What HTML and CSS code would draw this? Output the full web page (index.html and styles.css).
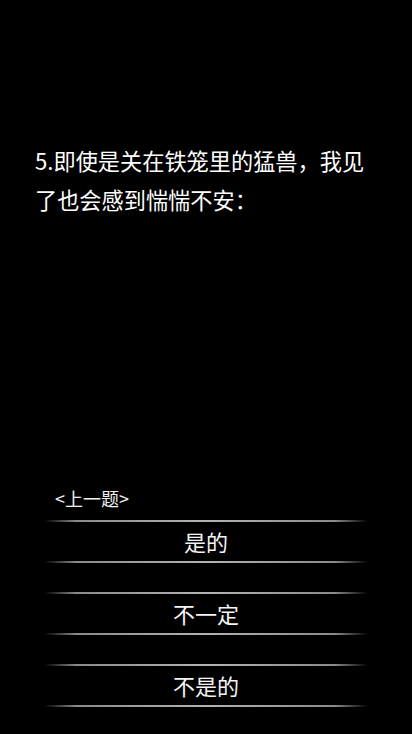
FILE: index.html
```html
<!DOCTYPE html>
<html lang="zh">
<head>
<meta charset="utf-8">
<meta name="viewport" content="width=412">
<link rel="stylesheet" href="styles.css">
</head>
<body>
<div class="screen">
  <div class="question">5.即使是关在铁笼里的猛兽，我见了也会感到惴惴不安：</div>
  <div class="answers">
    <div class="prev">&lt;上一题&gt;</div>
    <div class="option">是的</div>
    <div class="option">不一定</div>
    <div class="option">不是的</div>
  </div>
</div>
</body>
</html>
```
FILE: styles.css
```css
html, body {
  margin: 0;
  padding: 0;
  background: #000;
}
.screen {
  height: 734px;
  display: flex;
  flex-direction: column;
  font-family: "Noto Sans CJK SC", "Noto Sans", sans-serif;
  color: #fff;
}
.question {
  padding: 141px 30px 0 35px;
  font-size: 22.2px;
  line-height: 39px;
}
.answers {
  margin-top: auto;
  padding: 0 44px 28px 44px;
  display: flex;
  flex-direction: column;
  gap: 31px;
}
.prev {
  font-size: 18px;
  line-height: 24px;
  padding-left: 11px;
  margin-bottom: -20px;
  color: #f2f2f2;
}
.option {
  position: relative;
  height: 41px;
  padding-bottom: 2px;
  box-sizing: border-box;
  display: flex;
  align-items: center;
  justify-content: center;
  font-size: 22px;
  color: #f4f4f4;
}
.option::before,
.option::after {
  content: "";
  position: absolute;
  left: 0;
  right: 0;
  height: 2px;
  background: linear-gradient(to right, rgba(160,160,160,0) 0%, #8a8a8a 10%, #b4b4b4 50%, #8a8a8a 90%, rgba(160,160,160,0) 100%);
}
.option::before { top: -1px; }
.option::after { bottom: -1px; }
```
